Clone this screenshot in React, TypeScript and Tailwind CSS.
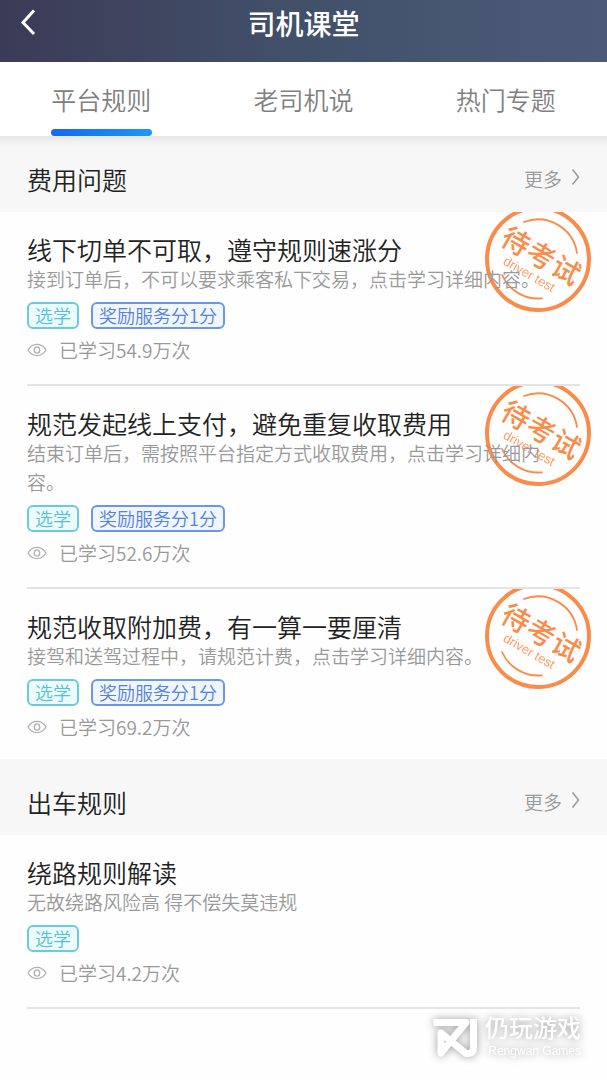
import { useState } from "react";

type Course = {
  title: string;
  desc: string;
  score?: string;
  learned: string;
  pending?: boolean;
};

type Section = {
  name: string;
  courses: Course[];
};

const tabs = ["平台规则", "老司机说", "热门专题"];

const sections: Section[] = [
  {
    name: "费用问题",
    courses: [
      {
        title: "线下切单不可取，遵守规则速涨分",
        desc: "接到订单后，不可以要求乘客私下交易，点击学习详细内容。",
        score: "奖励服务分1分",
        learned: "已学习54.9万次",
        pending: true,
      },
      {
        title: "规范发起线上支付，避免重复收取费用",
        desc: "结束订单后，需按照平台指定方式收取费用，点击学习详细内容。",
        score: "奖励服务分1分",
        learned: "已学习52.6万次",
        pending: true,
      },
      {
        title: "规范收取附加费，有一算一要厘清",
        desc: "接驾和送驾过程中，请规范计费，点击学习详细内容。",
        score: "奖励服务分1分",
        learned: "已学习69.2万次",
        pending: true,
      },
    ],
  },
  {
    name: "出车规则",
    courses: [
      {
        title: "绕路规则解读",
        desc: "无故绕路风险高 得不偿失莫违规",
        learned: "已学习4.2万次",
      },
    ],
  },
];

function Stamp() {
  return (
    <svg className="absolute -top-2 right-[14px] w-[110px] h-[110px]" viewBox="-55 -55 110 110" fill="none" stroke="#fa8c4b">
      <circle r="51" strokeWidth="4" />
      <path d="M-14 -37A39.5 39.5 0 0 1 39 -6" strokeWidth="1.8" strokeLinecap="round" />
      <path d="M-36 16A39.5 39.5 0 0 0 4 39.3" strokeWidth="1.8" strokeLinecap="round" />
      <g transform="rotate(30)" fill="#fa8c4b" stroke="none" textAnchor="middle">
        <text x="-28 1 30" y="6" fontSize="28" fontWeight="500">待考试</text>
        <text x="0" y="22" fontSize="13" opacity="0.85" className="font-['Liberation_Sans',sans-serif]">driver test</text>
      </g>
    </svg>
  );
}

function EyeIcon() {
  return (
    <svg className="w-5 h-5" viewBox="0 0 20 20" fill="none" stroke="#b0b0b0" strokeWidth="1.3">
      <path d="M1 10C3.5 6 6.5 4.4 10 4.4S16.5 6 19 10C16.5 14 13.5 15.6 10 15.6S3.5 14 1 10Z" />
      <ellipse cx="10" cy="10" rx="2.7" ry="3.2" />
    </svg>
  );
}

function CourseItem({ course, divider }: { course: Course; divider: boolean }) {
  return (
    <article className="relative overflow-hidden">
      {course.pending && <Stamp />}
      <div className={`relative mx-[27px] pt-[22px] ${divider ? "pb-5 border-b-2 border-[#e4e4e4]" : "pb-[18px]"}`}>
        <h3 className="text-[25px] leading-[30px] text-[#222]">{course.title}</h3>
        <p className="pr-8 text-[19px] leading-[29px] text-[#999]">{course.desc}</p>
        <div className="flex gap-3 mt-[9px] text-[18px] leading-[23px]">
          <span className="px-1.5 border-2 border-[#68cbdf] rounded-md bg-[#eefbfd] text-[#4fc3d9]">选学</span>
          {course.score && (
            <span className="px-1.5 border-2 border-[#6d96e6] rounded-md bg-[#f0f6fe] text-[#5580dc]">{course.score}</span>
          )}
        </div>
        <div className="flex items-center gap-3 mt-1.5 text-[19px] leading-[29px] text-[#999]">
          <EyeIcon />
          <span>{course.learned}</span>
        </div>
      </div>
    </article>
  );
}

function App() {
  const [activeTab, setActiveTab] = useState(tabs[0]);

  return (
    <div className="relative min-h-screen bg-[#fefefe] font-[350] font-['Noto_Sans_CJK_SC',sans-serif]">
      <header className="relative flex justify-center h-[62px] pt-1 bg-linear-to-r from-[#3b3b57] via-[#42516a] to-[#4c5a78] text-white">
        <button aria-label="返回" className="absolute left-5 top-2">
          <svg className="w-4 h-7" viewBox="0 0 16 28" fill="none" stroke="currentColor" strokeWidth="3">
            <path d="M14 2.5L3 14.5L14 26" />
          </svg>
        </button>
        <h1 className="text-[28px] leading-[38px] font-medium">司机课堂</h1>
      </header>

      <nav className="grid grid-cols-3 h-[74px] bg-white">
        {tabs.map((tab) => (
          <button
            key={tab}
            className="flex flex-col items-center justify-between pt-5 text-[25px] leading-[34px] text-[#808080]"
            onClick={() => setActiveTab(tab)}
          >
            {tab}
            {tab === activeTab && <span className="w-[101px] h-[7px] rounded-full bg-linear-to-r from-[#1668ee] to-[#2196f8]" />}
          </button>
        ))}
      </nav>

      <main>
        {sections.map((section, i) => (
          <section key={section.name}>
            <div className={`flex items-center justify-between h-[76px] pt-2.5 px-[27px] bg-[#f7f7f7] ${i === 0 ? "shadow-[inset_0_12px_8px_-8px_#e2e2e2]" : ""}`}>
              <h2 className="text-[25px] leading-[34px] text-[#222]">{section.name}</h2>
              <a href="#" className="flex items-center gap-2 text-[19px] text-[#999]">
                更多
                <svg className="w-2.5 h-5 mb-1" viewBox="0 0 10 20" fill="none" stroke="currentColor" strokeWidth="1.5">
                  <path d="M2.5 2.5L8.5 10L2.5 17.5" />
                </svg>
              </a>
            </div>
            {section.courses.map((course, j) => (
              <CourseItem
                key={course.title}
                course={course}
                divider={j < section.courses.length - 1 || i === sections.length - 1}
              />
            ))}
          </section>
        ))}
      </main>

      <div className="absolute right-[26px] bottom-5 flex items-center gap-2 text-white drop-shadow-[0_0_4px_#999] font-['Liberation_Sans','Noto_Sans_CJK_SC',sans-serif]">
        <svg className="w-11 h-[38px]" viewBox="0 0 44 38" fill="none" stroke="currentColor" strokeWidth="7" strokeLinejoin="round">
          <path d="M0.5 3.5H33L8 34V14L33 34.500H36Q40.500 34 40.500 29V0" />
        </svg>
        <div className="text-right">
          <div className="text-[24px] leading-[27px] font-medium">仍玩游戏</div>
          <div className="text-[12px] leading-[18px]">Rengwan Games</div>
        </div>
      </div>
    </div>
  );
}

export default App;
